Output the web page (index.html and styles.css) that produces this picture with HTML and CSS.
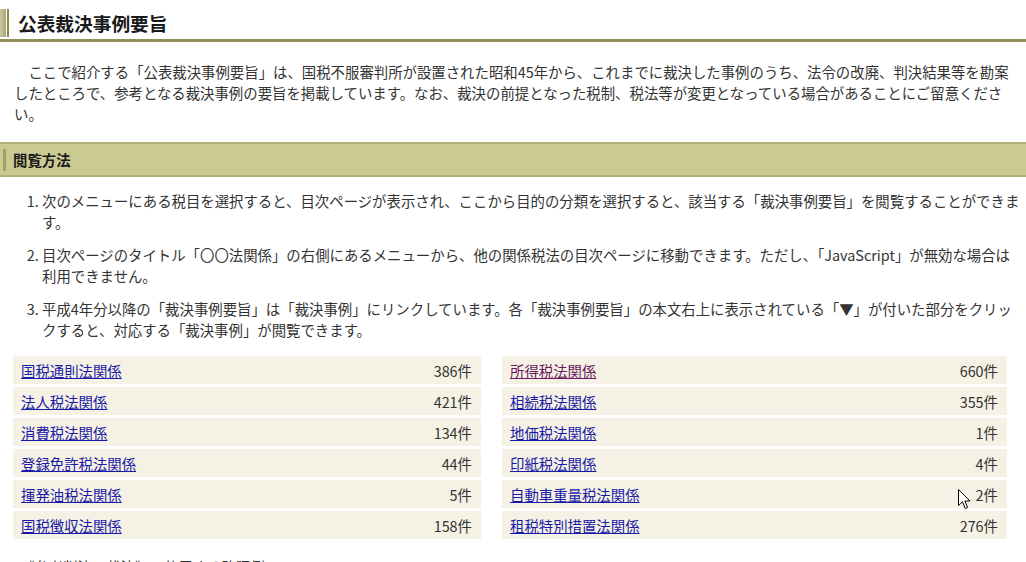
FILE: index.html
```html
<!DOCTYPE html>
<html lang="ja">
<head>
    <meta charset="UTF-8">
    <meta name="viewport" content="width=device-width, initial-scale=1.0">
    <title>公表裁決事例要旨</title>
    <link rel="stylesheet" href="styles.css">
</head>
<body>
    <h1 class="page-title">公表裁決事例要旨</h1>

    <p class="lead">ここで紹介する「公表裁決事例要旨」は、国税不服審判所が設置された昭和45年から、これまでに裁決した事例のうち、法令の改廃、判決結果等を勘案したところで、参考となる裁決事例の要旨を掲載しています。なお、裁決の前提となった税制、税法等が変更となっている場合があることにご留意ください。</p>

    <h2 class="section-title">閲覧方法</h2>

    <ol class="howto">
        <li>次のメニューにある税目を選択すると、目次ページが表示され、ここから目的の分類を選択すると、該当する「裁決事例要旨」を閲覧することができます。</li>
        <li>目次ページのタイトル「〇〇法関係」の右側にあるメニューから、他の関係税法の目次ページに移動できます。ただし、「JavaScript」が無効な場合は利用できません。</li>
        <li>平成4年分以降の「裁決事例要旨」は「裁決事例」にリンクしています。各「裁決事例要旨」の本文右上に表示されている「▼」が付いた部分をクリックすると、対応する「裁決事例」が閲覧できます。</li>
    </ol>

    <div class="tax-menu">
        <ul class="tax-list">
            <li><a href="#">国税通則法関係</a><span>386件</span></li>
            <li><a href="#">法人税法関係</a><span>421件</span></li>
            <li><a href="#">消費税法関係</a><span>134件</span></li>
            <li><a href="#">登録免許税法関係</a><span>44件</span></li>
            <li><a href="#">揮発油税法関係</a><span>5件</span></li>
            <li><a href="#">国税徴収法関係</a><span>158件</span></li>
        </ul>
        <ul class="tax-list">
            <li><a href="#" class="visited">所得税法関係</a><span>660件</span></li>
            <li><a href="#">相続税法関係</a><span>355件</span></li>
            <li><a href="#">地価税法関係</a><span>1件</span></li>
            <li><a href="#">印紙税法関係</a><span>4件</span></li>
            <li><a href="#">自動車重量税法関係</a><span>2件</span></li>
            <li><a href="#">租税特別措置法関係</a><span>276件</span></li>
        </ul>
    </div>

    <p class="abbr">《参考判決・裁決》で使用する略語例</p>

    <svg class="cursor" width="13" height="21" viewBox="0 0 13 21">
        <path d="M0.5 0.5 L0.5 16.5 L4.5 12.8 L7.3 19.5 L9.6 18.5 L6.9 12 L12 12 Z" fill="#fff" stroke="#000" stroke-width="1"/>
    </svg>
</body>
</html>
```

FILE: styles.css
```css
body {
    margin: 0;
    font-family: "Noto Sans CJK JP", sans-serif;
    font-size: 14.4px;
    line-height: 21px;
    color: #333;
    background-color: #fff;
    position: relative;
}

a {
    color: #1a1aa8;
}

a.visited {
    color: #6a1a5e;
}

.page-title {
    margin: 0;
    padding: 9px 0 2px 18px;
    font-size: 18.7px;
    line-height: 28px;
    color: #1a1a1a;
    border-bottom: 3px solid #939157;
    background:
        linear-gradient(to right, #c9c8a6, #a9a773) 0 9px / 6px 28px no-repeat,
        linear-gradient(#8d8b52, #8d8b52) 7px 9px / 2px 28px no-repeat;
}

.lead {
    margin: 19px 4px 0 14px;
    text-indent: 1em;
}

.section-title {
    margin: 18px 0 0 0;
    padding: 0 0 0 13px;
    font-size: 14.4px;
    line-height: 31px;
    color: #1a1a1a;
    border-top: 2px solid #b2b07a;
    border-bottom: 2px solid #b2b07a;
    background:
        linear-gradient(#a3a064, #a3a064) 3px 5px / 3px 22px no-repeat,
        #cbca93;
}

.howto {
    margin: 13px 4px 0 0;
    padding-left: 42px;
}

.howto li {
    margin-bottom: 12px;
}

.howto li:last-child {
    margin-bottom: 0;
}

.tax-menu {
    display: grid;
    grid-template-columns: 468px 505px;
    column-gap: 21px;
    margin: 16px 0 0 13px;
}

.tax-list {
    list-style: none;
    margin: 0;
    padding: 0;
    display: flex;
    flex-direction: column;
    gap: 3px;
}

.tax-list li {
    display: flex;
    justify-content: space-between;
    align-items: center;
    height: 28px;
    padding: 0 9px 0 8px;
    background-color: #f5f1e4;
}

.abbr {
    margin: 17px 0 0 20px;
}

.cursor {
    position: absolute;
    left: 958px;
    top: 489px;
}
```
